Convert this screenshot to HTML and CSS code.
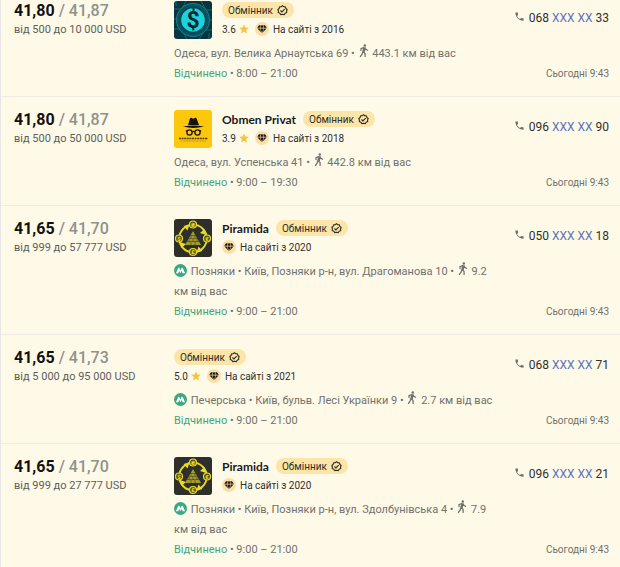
FILE: index.html
```
<!DOCTYPE html>
<html lang="uk">
<head>
    <meta charset="UTF-8">
    <meta name="viewport" content="width=device-width, initial-scale=1.0">
    <title>Обмінники</title>
    <link rel="stylesheet" href="styles.css">
</head>
<body>
    <!-- shared icons -->
    <svg class="sprite" width="0" height="0">
        <symbol id="verified" viewBox="0 0 24 24">
            <path fill="none" stroke="currentColor" stroke-width="2.4" stroke-linejoin="round" d="M12 1.500l2.800 2.300 3.600.3.900 3.400 2.900 2.200L20.900 13l.3 3.600-3.400 1.400-2 3-3.800-.7-3.800.7-2-3-3.400-1.400.3-3.600L1.800 9.700l2.900-2.200.9-3.400 3.600-.3z"/>
            <path fill="none" stroke="currentColor" stroke-width="2.4" d="M7.500 12l3.200 3.200 6-6.200"/>
        </symbol>
        <symbol id="star" viewBox="0 0 24 24">
            <path fill="#f5c542" d="M12 1l3.300 7.400 8 .8-6 5.400 1.700 7.900-7-4.100-7 4.100 1.700-7.900-6-5.400 8-.8z"/>
        </symbol>
        <symbol id="diamond" viewBox="0 0 28 28">
            <circle cx="14" cy="14" r="14" fill="#fbdfa4"/>
            <path fill="#1c1c1c" d="M8 6.500h3.500L10 11.500H4.500zM12.500 6.500h3l1.500 5h-6zM16.500 6.500H20l3.500 5h-5.500zM4.800 12.800h5l2.900 8zM10.800 12.800h6.400L14 22.500zM18.200 12.800h5l-7.900 8z"/>
        </symbol>
        <symbol id="walk" viewBox="0 0 16 24">
            <circle cx="9.500" cy="2.600" r="2.300" fill="currentColor"/>
            <path fill="none" stroke="currentColor" stroke-width="2.400" stroke-linecap="round" stroke-linejoin="round" d="M2.500 12V8.500L7.500 6.500 6 14l4 3.500V23M5.600 14.500L4.500 18.500 1.500 23M10 7l1.500 3 3 1.500M9.500 7L8.600 13.500"/>
        </symbol>
        <symbol id="metro" viewBox="0 0 26 26">
            <circle cx="13" cy="13" r="13" fill="#3aa981"/>
            <path fill="#fff" d="M3.800 18.500L8.800 7.500h1.700L13 13l2.500-5.500h1.700l5 11h-5l-1.600-5L13 18.300l-2.600-4.800-1.600 5z"/>
        </symbol>
        <symbol id="phone" viewBox="0 0 24 24">
            <path fill="currentColor" d="M6.600 10.800c1.400 2.800 3.800 5.200 6.600 6.600l2.200-2.200c.3-.3.700-.4 1-.2 1.200.4 2.400.6 3.600.6.600 0 1 .4 1 1V20c0 .6-.4 1-1 1C10.600 21 3 13.400 3 4c0-.6.400-1 1-1h3.500c.6 0 1 .4 1 1 0 1.200.2 2.400.6 3.600.1.400 0 .7-.3 1z"/>
        </symbol>
        <symbol id="logo-dollar" viewBox="0 0 38 38">
            <rect width="38" height="38" fill="#073640"/>
            <path stroke="#126973" stroke-width="1" fill="none" d="M0 8h8l4-8M0 28h7l6 10M38 9h-6l-5-9M38 29h-7l-6 9M2 0v5M35 38v-6M0 18h4M34 19h4"/>
            <circle cx="19" cy="19" r="16.500" fill="#075561" stroke="#17818a" stroke-width="1"/>
            <circle cx="19" cy="19" r="12.800" fill="#1bd3dc" stroke="#094753" stroke-width="2"/>
            <text x="19" y="27" text-anchor="middle" class="logo-sign">$</text>
        </symbol>
        <symbol id="logo-privat" viewBox="0 0 38 38">
            <rect width="38" height="38" fill="#fdc70c"/>
            <path fill="#16130a" d="M14 15l2-6.500c.3-.8 1-.9 1.700-.5l1.600.7 1.500-.7c.8-.4 1.500-.2 1.800.5L25 15zM9 16.500q10.500-1.800 21 0-10.500 2.800-21 0z"/>
            <g fill="none" stroke="#16130a" stroke-width="1.300">
                <circle cx="15.500" cy="22.500" r="2.600"/>
                <circle cx="23.500" cy="22.500" r="2.600"/>
                <path d="M18 22q1.500-1.200 3 0M13 21.500l-1-1M26 21.500l1-1"/>
            </g>
            <path stroke="#54430b" stroke-width="1.500" stroke-dasharray="2 .6" d="M5 28.500h29"/>
            <path stroke="#b58e10" stroke-width="1" stroke-dasharray="1 .6" d="M7 31h25"/>
        </symbol>
        <symbol id="logo-piramida" viewBox="0 0 38 38">
            <rect width="38" height="38" fill="#2e2f2b"/>
            <circle cx="19" cy="19.500" r="13.800" fill="none" stroke="#e8dc22" stroke-width="1.800"/>
            <path fill="#e8dc22" d="M9.500 7l6-1.500-2 6zM30.500 10l1.500 6-6-2zM28.500 32l-6 1.500 2-6zM7.500 29L6 23l6 2z"/>
            <g fill="#5a5820" stroke="#e8dc22" stroke-width="1.200">
                <circle cx="19" cy="5.500" r="3.500"/>
                <circle cx="33" cy="19.500" r="3.500"/>
                <circle cx="19" cy="33" r="3.500"/>
                <circle cx="5" cy="19.500" r="3.500"/>
            </g>
            <g class="coin-sign">
                <text x="19" y="8">₴</text>
                <text x="33" y="22">€</text>
                <text x="19" y="35">£</text>
                <text x="5" y="22">$</text>
            </g>
            <path fill="#a29c2a" d="M19 12l8 14H11z"/>
            <path stroke="#2e2f2b" stroke-width=".5" d="M15 16.500h8M13 19.500h12M11 22.500h16M17 16v3M21 16v3M15 20v3M19 20v3M23 20v3M17 23v3M21 23v3"/>
        </symbol>
    </svg>

    <main class="offers">
        <article class="offer">
            <div class="rate">
                <div class="price"><strong>41,80</strong> / 41,87</div>
                <div class="limits">від 500 до 10 000 USD</div>
            </div>
            <div class="info">
                <div class="seller">
                    <svg class="logo"><use href="#logo-dollar"/></svg>
                    <div class="about">
                        <div class="title"><span class="badge">Обмінник <svg><use href="#verified"/></svg></span></div>
                        <div class="meta"><span class="rating">3.6 <svg><use href="#star"/></svg></span><svg class="diamond"><use href="#diamond"/></svg>На сайті з 2016</div>
                    </div>
                </div>
                <div class="address">Одеса, вул. Велика Арнаутська 69 • <svg class="walk"><use href="#walk"/></svg> 443.1 км від вас</div>
                <div class="hours"><span class="open">Відчинено</span> • 8:00 – 21:00</div>
            </div>
            <div class="contact">
                <button class="phone"><svg><use href="#phone"/></svg>068 <span>XXX XX</span> 33</button>
                <time class="date">Сьогодні 9:43</time>
            </div>
        </article>

        <article class="offer">
            <div class="rate">
                <div class="price"><strong>41,80</strong> / 41,87</div>
                <div class="limits">від 500 до 50 000 USD</div>
            </div>
            <div class="info">
                <div class="seller">
                    <svg class="logo"><use href="#logo-privat"/></svg>
                    <div class="about">
                        <div class="title"><a class="name" href="#">Obmen Privat</a><span class="badge">Обмінник <svg><use href="#verified"/></svg></span></div>
                        <div class="meta"><span class="rating">3.9 <svg><use href="#star"/></svg></span><svg class="diamond"><use href="#diamond"/></svg>На сайті з 2018</div>
                    </div>
                </div>
                <div class="address">Одеса, вул. Успенська 41 • <svg class="walk"><use href="#walk"/></svg> 442.8 км від вас</div>
                <div class="hours"><span class="open">Відчинено</span> • 9:00 – 19:30</div>
            </div>
            <div class="contact">
                <button class="phone"><svg><use href="#phone"/></svg>096 <span>XXX XX</span> 90</button>
                <time class="date">Сьогодні 9:43</time>
            </div>
        </article>

        <article class="offer">
            <div class="rate">
                <div class="price"><strong>41,65</strong> / 41,70</div>
                <div class="limits">від 999 до 57 777 USD</div>
            </div>
            <div class="info">
                <div class="seller">
                    <svg class="logo"><use href="#logo-piramida"/></svg>
                    <div class="about">
                        <div class="title"><a class="name" href="#">Piramida</a><span class="badge">Обмінник <svg><use href="#verified"/></svg></span></div>
                        <div class="meta"><svg class="diamond"><use href="#diamond"/></svg>На сайті з 2020</div>
                    </div>
                </div>
                <div class="address"><svg class="metro"><use href="#metro"/></svg> Позняки • Київ, Позняки р-н, вул. Драгоманова 10 • <svg class="walk"><use href="#walk"/></svg> 9.2 км від вас</div>
                <div class="hours"><span class="open">Відчинено</span> • 9:00 – 21:00</div>
            </div>
            <div class="contact">
                <button class="phone"><svg><use href="#phone"/></svg>050 <span>XXX XX</span> 18</button>
                <time class="date">Сьогодні 9:43</time>
            </div>
        </article>

        <article class="offer">
            <div class="rate">
                <div class="price"><strong>41,65</strong> / 41,73</div>
                <div class="limits">від 5 000 до 95 000 USD</div>
            </div>
            <div class="info">
                <div class="seller">
                    <div class="about">
                        <div class="title"><span class="badge">Обмінник <svg><use href="#verified"/></svg></span></div>
                        <div class="meta"><span class="rating">5.0 <svg><use href="#star"/></svg></span><svg class="diamond"><use href="#diamond"/></svg>На сайті з 2021</div>
                    </div>
                </div>
                <div class="address"><svg class="metro"><use href="#metro"/></svg> Печерська • Київ, бульв. Лесі Українки 9 • <svg class="walk"><use href="#walk"/></svg> 2.7 км від вас</div>
                <div class="hours"><span class="open">Відчинено</span> • 9:00 – 21:00</div>
            </div>
            <div class="contact">
                <button class="phone"><svg><use href="#phone"/></svg>068 <span>XXX XX</span> 71</button>
                <time class="date">Сьогодні 9:43</time>
            </div>
        </article>

        <article class="offer">
            <div class="rate">
                <div class="price"><strong>41,65</strong> / 41,70</div>
                <div class="limits">від 999 до 27 777 USD</div>
            </div>
            <div class="info">
                <div class="seller">
                    <svg class="logo"><use href="#logo-piramida"/></svg>
                    <div class="about">
                        <div class="title"><a class="name" href="#">Piramida</a><span class="badge">Обмінник <svg><use href="#verified"/></svg></span></div>
                        <div class="meta"><svg class="diamond"><use href="#diamond"/></svg>На сайті з 2020</div>
                    </div>
                </div>
                <div class="address"><svg class="metro"><use href="#metro"/></svg> Позняки • Київ, Позняки р-н, вул. Здолбунівська 4 • <svg class="walk"><use href="#walk"/></svg> 7.9 км від вас</div>
                <div class="hours"><span class="open">Відчинено</span> • 9:00 – 21:00</div>
            </div>
            <div class="contact">
                <button class="phone"><svg><use href="#phone"/></svg>096 <span>XXX XX</span> 21</button>
                <time class="date">Сьогодні 9:43</time>
            </div>
        </article>
    </main>
</body>
</html>
```
FILE: styles.css
```
* {
    box-sizing: border-box;
}
body {
    margin: 0;
    background-color: #fff9e8;
    font-family: Roboto, "Noto Sans", sans-serif;
    font-size: 11px;
    color: #6f726d;
}
.sprite {
    display: block;
}
.offers {
    border-left: 1px solid #e6e5e8;
}
.offer {
    display: grid;
    grid-template-columns: 148px minmax(0, 324px) 1fr;
    column-gap: 12px;
    padding: 13px 11px 13px 13px;
    border-top: 1px solid #eeebe3;
}
.offer:first-child {
    padding-top: 1px;
    border-top: none;
}
.offer:last-child {
    padding-bottom: 8px;
}
.price {
    font-size: 16px;
    font-weight: 500;
    line-height: 20px;
    color: #8d938d;
}
.price strong {
    font-weight: 700;
    color: #111;
}
.limits {
    line-height: 18px;
    color: #5c5f59;
}
.seller {
    display: flex;
    gap: 10px;
    height: 38px;
    margin-bottom: 5px;
}
.logo {
    width: 38px;
    height: 38px;
    border-radius: 3px;
}
.logo-sign {
    font: 700 23px Roboto, sans-serif;
    fill: #05252e;
}
.coin-sign {
    font: 700 6px Roboto, sans-serif;
    fill: #e8dc22;
    text-anchor: middle;
}
.title {
    display: flex;
    align-items: center;
    gap: 7px;
    height: 18px;
}
.name {
    font-family: Lato, sans-serif;
    font-size: 12px;
    font-weight: 700;
    color: #1b1b1b;
    text-decoration: none;
}
.badge {
    display: flex;
    align-items: center;
    gap: 4px;
    height: 16px;
    padding: 0 6px;
    border-radius: 8px;
    background-color: #fbe5a8;
    font-size: 10px;
    color: #302e28;
}
.badge svg {
    width: 11px;
    height: 11px;
}
.meta {
    display: flex;
    align-items: center;
    height: 20px;
    font-size: 10px;
    color: #30302c;
}
.rating {
    display: flex;
    align-items: center;
    gap: 3px;
    margin-right: 6px;
}
.rating svg {
    width: 10px;
    height: 10px;
}
.diamond {
    width: 14px;
    height: 14px;
    margin-right: 4px;
}
.address {
    line-height: 20px;
}
.walk {
    width: 10px;
    height: 13px;
    margin: 0 1px;
}
.metro {
    width: 13px;
    height: 13px;
    margin-right: 1px;
    vertical-align: -2px;
}
.hours {
    line-height: 19px;
}
.open {
    color: #45a57d;
}
.contact {
    display: flex;
    flex-direction: column;
    align-items: flex-end;
    justify-content: space-between;
    padding-top: 8px;
    white-space: nowrap;
}
.phone {
    padding: 0;
    border: none;
    background: none;
    font: inherit;
    font-size: 12px;
    line-height: 18px;
    color: #30302c;
    cursor: pointer;
}
.phone svg {
    width: 11px;
    height: 11px;
    margin-right: 4px;
    color: #6f726d;
}
.phone span {
    color: #5873bd;
}
.date {
    font-size: 10px;
    line-height: 19px;
}
```
